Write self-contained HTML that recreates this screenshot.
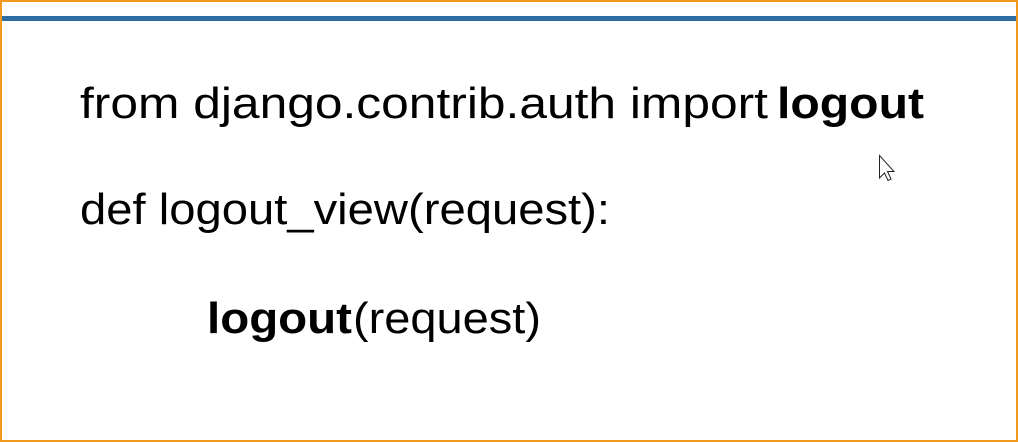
<!DOCTYPE html>
<html><head><meta charset="utf-8"><style>
html,body{margin:0;padding:0;background:#fff;}
body{width:1018px;height:442px;overflow:hidden;position:relative;}
.frame{position:absolute;left:0;top:0;width:1014px;height:438px;border:2px solid #f39a1e;border-right-width:2px;}
.bar{position:absolute;left:2px;right:2px;top:16px;height:5px;background:#2e6da4;}
svg{position:absolute;left:0;top:0;}
text{font-family:"Liberation Sans",sans-serif;font-size:44px;fill:#000;}
</style></head><body>
<div class="frame"></div>
<div class="bar"></div>
<svg width="1018" height="442">
<text x="80" y="118" textLength="688" lengthAdjust="spacingAndGlyphs">from django.contrib.auth import</text>
<text x="777" y="118" textLength="147" lengthAdjust="spacingAndGlyphs" font-weight="bold">logout</text>
<text x="80" y="224" textLength="530" lengthAdjust="spacingAndGlyphs">def logout_view(request):</text>
<text x="207" y="333" textLength="145" lengthAdjust="spacingAndGlyphs" font-weight="bold">logout</text>
<text x="353" y="333" textLength="188" lengthAdjust="spacingAndGlyphs">(request)</text>
<path d="M879.5 155.5 L879.5 178 L884.5 173 L888 180.5 L891 179 L887.5 171.5 L894 171.5 Z" fill="#fff" stroke="#222" stroke-width="1"/>
</svg>
</body></html>
